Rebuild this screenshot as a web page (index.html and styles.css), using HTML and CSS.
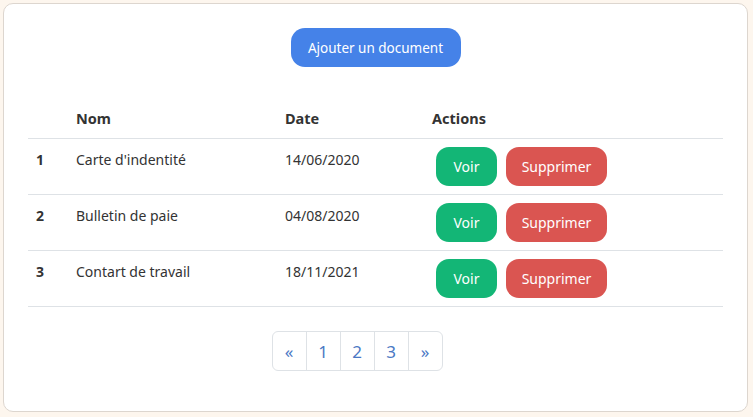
FILE: index.html
```html
<!DOCTYPE html>
<html lang="fr">
<head>
<meta charset="utf-8">
<link rel="stylesheet" href="styles.css">
</head>
<body>
<div class="card">
  <div class="top">
    <button class="btn btn-primary">Ajouter un document</button>
  </div>
  <table class="docs">
    <thead>
      <tr><th class="c-num"></th><th class="c-nom">Nom</th><th class="c-date">Date</th><th class="c-act">Actions</th></tr>
    </thead>
    <tbody>
      <tr><td class="num">1</td><td>Carte d'indentité</td><td>14/06/2020</td><td class="act"><button class="btn btn-green">Voir</button><button class="btn btn-red">Supprimer</button></td></tr>
      <tr><td class="num">2</td><td>Bulletin de paie</td><td>04/08/2020</td><td class="act"><button class="btn btn-green">Voir</button><button class="btn btn-red">Supprimer</button></td></tr>
      <tr><td class="num">3</td><td>Contart de travail</td><td>18/11/2021</td><td class="act"><button class="btn btn-green">Voir</button><button class="btn btn-red">Supprimer</button></td></tr>
    </tbody>
  </table>
  <nav class="pager">
    <span class="page">«</span><span class="page">1</span><span class="page">2</span><span class="page">3</span><span class="page">»</span>
  </nav>
</div>
</body>
</html>
```
FILE: styles.css
```css
html, body {
  margin: 0;
  padding: 0;
  background: #fdf6ee;
}
body {
  padding: 3px 5px 5px 3px;
  font-family: "Noto Sans", "Open Sans", sans-serif;
  color: #333;
}
.card {
  background: #fff;
  border: 1px solid #ddd6cf;
  border-radius: 10px;
  height: 409px;
  box-sizing: border-box;
  padding: 24px 24px 0 24px;
}
.top {
  display: flex;
  justify-content: center;
}
.btn {
  border: none;
  color: #fff;
  font-family: inherit;
  font-size: 14px;
  border-radius: 13px;
  height: 39px;
  padding: 0 18px;
  cursor: pointer;
}
.btn-primary {
  background: #4582e8;
  width: 170px;
  padding: 0;
  border-radius: 14px;
  font-size: 13.5px;
}
.btn-green { background: #13b676; width: 61px; padding: 0; }
.btn-red { background: #da5551; width: 101px; padding: 0; margin-left: 9px; }
.docs {
  margin-top: 33px;
  width: 695px;
  border-collapse: collapse;
  font-size: 14px;
}
.docs th {
  text-align: left;
  font-weight: 700;
  font-size: 14.5px;
  padding: 0 8px 10px 8px;
  height: 28px;
  vertical-align: bottom;
  border-bottom: 1px solid #dee2e6;
}
.c-num { width: 24px; }
.c-nom { width: 193px; }
.c-date { width: 131px; }
.docs td {
  padding: 11px 8px 0 8px;
  height: 44px;
  vertical-align: top;
  border-bottom: 1px solid #dee2e6;
}
.docs td.num { font-weight: 700; }
.docs td.act {
  padding: 8px 8px 0 12px;
  white-space: nowrap;
}
.pager {
  display: flex;
  justify-content: center;
  margin-top: 24px;
  padding-right: 36px;
}
.page {
  display: flex;
  align-items: center;
  justify-content: center;
  width: 35px;
  height: 40px;
  box-sizing: border-box;
  border: 1px solid #dee2e6;
  margin-left: -1px;
  color: #4a78c4;
  font-size: 17px;
}
.page:first-child { border-radius: 6px 0 0 6px; }
.page:last-child { border-radius: 0 6px 6px 0; }
```
